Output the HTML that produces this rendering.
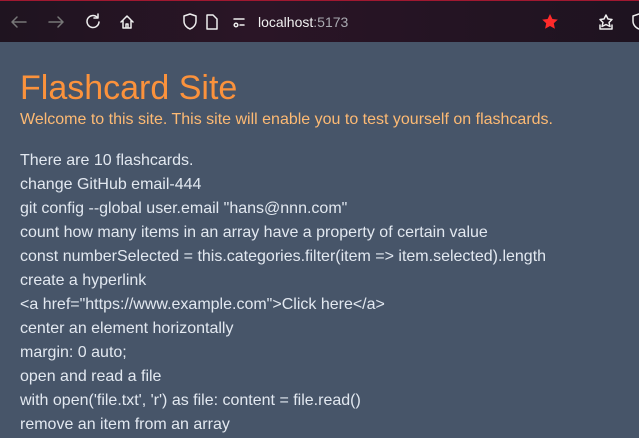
<!DOCTYPE html>
<html><head><meta charset="utf-8"><style>
html,body{margin:0;padding:0;width:639px;height:438px;overflow:hidden;background:#475569;font-family:"Liberation Sans",sans-serif}
.bar{position:absolute;left:0;top:0;width:639px;height:42px;background:linear-gradient(90deg,#1f1420,#2a1526 40%,#1e1320);border-top:1px solid #a01830;box-sizing:border-box}
.bar svg{position:absolute}
.url{position:absolute;left:258px;top:13px;font-size:14px;color:#f0f0f0}
.url span{color:#a9a9b0}
.main{position:absolute;left:20px;top:42px;color:#e2e8f0}
h1{margin:0;position:absolute;top:26px;left:0;font-weight:normal;font-size:34px;color:#fb923c;white-space:nowrap;line-height:40px}
.sub{position:absolute;top:68px;left:0;font-size:16px;color:#fdba74;white-space:nowrap;line-height:20px}
.list{position:absolute;top:107px;left:0;font-size:16px;line-height:24px;white-space:nowrap}
</style></head><body>
<div class="bar">
<svg width="639" height="42" viewBox="0 0 639 42" fill="none" stroke-linecap="round" stroke-linejoin="round">
<g stroke="#777" stroke-width="1.5"><path d="M12 21h14M12 21l5-5M12 21l5 5"/><path d="M49 21h14M63 21l-5-5M63 21l-5 5"/></g>
<g stroke="#eee" stroke-width="1.5">
<path d="M97 16a6 6 0 1 0 2 5"/><path d="M98 13v4h-4"/>
<path d="M121 21l6-6 6 6M123 19v8h8v-8M126 27v-4h2v4"/>
<path d="M184 15l6-2 6 2v5c0 4-3 7-6 8-3-1-6-4-6-8z"/>
<path d="M207 14h6l4 4v10h-10z"/>
<circle cx="236" cy="24" r="1.8"/><path d="M234 18h10M240 24h4"/>
<path d="M600 28h12M600 24v4M612 24v4M606 14l2 4 4 .5-3 3 1 4-4-2-4 2 1-4-3-3 4-.5z"/>
<path d="M633 15l6-2 6 2v5c0 4-3 7-6 8-3-1-6-4-6-8z"/>
</g>
<path d="M550 13l2.4 5 5.4.6-4 3.7 1.1 5.4-4.9-2.7-4.9 2.7 1.1-5.4-4-3.7 5.4-.6z" fill="#ff2a2a"/>
</svg>
<div class="url">localhost<span>:5173</span></div>
</div>
<div class="main">
<h1>Flashcard Site</h1>
<div class="sub">Welcome to this site. This site will enable you to test yourself on flashcards.</div>
<div class="list">
There are 10 flashcards.<br>
change GitHub email-444<br>
git config --global user.email "hans@nnn.com"<br>
count how many items in an array have a property of certain value<br>
const numberSelected = this.categories.filter(item =&gt; item.selected).length<br>
create a hyperlink<br>
&lt;a href="https://www.example.com"&gt;Click here&lt;/a&gt;<br>
center an element horizontally<br>
margin: 0 auto;<br>
open and read a file<br>
with open('file.txt', 'r') as file: content = file.read()<br>
remove an item from an array
</div>
</div>
</body></html>
